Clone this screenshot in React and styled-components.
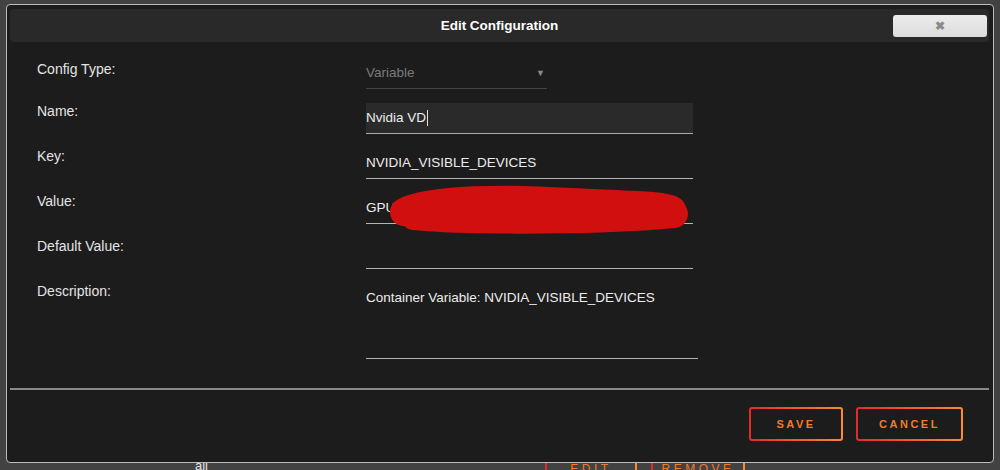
import React from "react";
import styled, { createGlobalStyle } from "styled-components";

const Global = createGlobalStyle`
  html, body { margin: 0; padding: 0; background: #424242; }
  body { font-family: "Liberation Sans", Arial, sans-serif; }
  #root { width: 1000px; height: 470px; position: relative; overflow: hidden; }
`;

const Page = styled.div`
  width: 1000px;
  height: 470px;
  background: #424242;
  position: relative;
`;

const PageRow = styled.div`
  display: flex;
  align-items: flex-start;
  padding-top: 452px;
  font-size: 13px;
  color: #e6e6e6;
`;

const PageCell = styled.div`
  width: ${(p) => p.$w}px;
  padding-top: 6px;
`;

const GradButton = styled.button`
  box-sizing: border-box;
  width: ${(p) => p.$w}px;
  height: ${(p) => p.$h}px;
  margin-left: ${(p) => p.$ml || 0}px;
  border: 2px solid transparent;
  border-radius: 3px;
  background: linear-gradient(#1c1c1c, #1c1c1c) padding-box,
    linear-gradient(90deg, #e22a27, #ff8a2e) border-box;
  color: #f07b2c;
  font-family: "Liberation Sans", Arial, sans-serif;
  font-weight: bold;
  font-size: 11px;
  letter-spacing: 2.5px;
  text-transform: uppercase;
  padding: 0;
  cursor: pointer;
`;

const PageButton = styled(GradButton)`
  background: linear-gradient(#424242, #424242) padding-box,
    linear-gradient(90deg, #e22a27, #ff8a2e) border-box;
  font-weight: normal;
  font-size: 12px;
  letter-spacing: 3.5px;
`;

const Dialog = styled.div`
  position: absolute;
  left: 6px;
  top: 4px;
  width: 988px;
  height: 459px;
  box-sizing: border-box;
  border: 1px solid #bdbdbd;
  border-radius: 4px;
  background: #1c1c1c;
  padding: 4px 4px 0 3px;
  display: flex;
  flex-direction: column;
`;

const TitleBar = styled.div`
  height: 33px;
  border-radius: 4px;
  background: #292929;
  display: grid;
  grid-template-columns: 1fr auto 1fr;
  align-items: center;
`;

const Title = styled.div`
  grid-column: 2;
  color: #ffffff;
  font-weight: bold;
  font-size: 13.5px;
`;

const CloseButton = styled.button`
  grid-column: 3;
  justify-self: end;
  margin-right: 2px;
  width: 94px;
  height: 22px;
  border: none;
  border-radius: 3px;
  background: linear-gradient(#ececec, #dcdcdc);
  color: #8a8a8a;
  font-size: 12px;
  font-weight: bold;
  display: flex;
  align-items: center;
  justify-content: center;
  padding: 0;
`;

const Form = styled.div`
  position: relative;
  padding: 16px 0 0 27px;
  display: flex;
  flex-direction: column;
  gap: 14px;
  flex: 1;
`;

const Row = styled.div`
  display: flex;
  align-items: flex-start;
`;

const Label = styled.div`
  width: 329px;
  flex: none;
  color: #e4e4e4;
  font-size: 14px;
  line-height: 16px;
  padding-top: ${(p) => p.$pt ?? 0}px;
`;

const Field = styled.div`
  box-sizing: border-box;
  width: ${(p) => p.$w || 327}px;
  height: ${(p) => p.$h || 31}px;
  border-bottom: 1px solid ${(p) => p.$line || "#b4b4b4"};
  background: ${(p) => p.$bg || "transparent"};
  color: ${(p) => p.$color || "#ececec"};
  font-size: 13.5px;
  display: flex;
  align-items: ${(p) => (p.$top ? "flex-start" : "center")};
  justify-content: space-between;
  padding-top: ${(p) => (p.$top ? "7px" : "0")};
  line-height: 16px;
`;

const Caret = styled.span`
  display: inline-block;
  width: 1px;
  height: 16px;
  background: #e0e0e0;
  margin-left: 1px;
  vertical-align: middle;
`;

const Arrow = styled.span`
  font-size: 9px;
  color: #8a8a8a;
  margin-right: 2px;
`;

const Scribble = styled.svg`
  position: absolute;
  left: 0;
  top: 0;
  pointer-events: none;
`;

const Separator = styled.div`
  height: 2px;
  background: #8a8a8a;
`;

const Footer = styled.div`
  display: flex;
  justify-content: flex-end;
  gap: 13px;
  padding: 17px 26px 21px 0;
`;

export default function App() {
  return (
    <>
      <Global />
      <Page>
        <PageRow>
          <PageCell $w={195}></PageCell>
          <PageCell $w={350}>all</PageCell>
          <PageButton $w={92} $h={34}>Edit</PageButton>
          <PageButton $w={94} $h={34} $ml={14}>Remove</PageButton>
        </PageRow>
        <Dialog>
          <TitleBar>
            <Title>Edit Configuration</Title>
            <CloseButton aria-label="close">✖</CloseButton>
          </TitleBar>
          <Form>
            <Row>
              <Label $pt={3}>Config Type:</Label>
              <Field $w={181} $line="#454545" $color="#7a7a7a">
                <span>Variable</span>
                <Arrow>▼</Arrow>
              </Field>
            </Row>
            <Row>
              <Label>Name:</Label>
              <Field $bg="#2a2a2a" $line="#aaaaaa">
                <span>
                  Nvidia VD<Caret />
                </span>
              </Field>
            </Row>
            <Row>
              <Label>Key:</Label>
              <Field>NVIDIA_VISIBLE_DEVICES</Field>
            </Row>
            <Row>
              <Label>Value:</Label>
              <Field>GPU</Field>
            </Row>
            <Row>
              <Label>Default Value:</Label>
              <Field></Field>
            </Row>
            <Row>
              <Label>Description:</Label>
              <Field $w={332} $h={76} $top>
                Container Variable: NVIDIA_VISIBLE_DEVICES
              </Field>
            </Row>
            <Scribble width="980" height="360" viewBox="0 0 980 360">
              <path
                d="M 394 170 C 420 156, 500 156, 560 160 C 620 163, 655 163, 662 168"
                stroke="#d20f0f"
                strokeWidth="28"
                strokeLinecap="round"
                fill="none"
              />
              <path
                d="M 404 174 C 470 180, 600 178, 664 172"
                stroke="#d20f0f"
                strokeWidth="28"
                strokeLinecap="round"
                fill="none"
              />
            </Scribble>
          </Form>
          <Separator />
          <Footer>
            <GradButton $w={94} $h={34}>Save</GradButton>
            <GradButton $w={107} $h={34}>Cancel</GradButton>
          </Footer>
        </Dialog>
      </Page>
    </>
  );
}
